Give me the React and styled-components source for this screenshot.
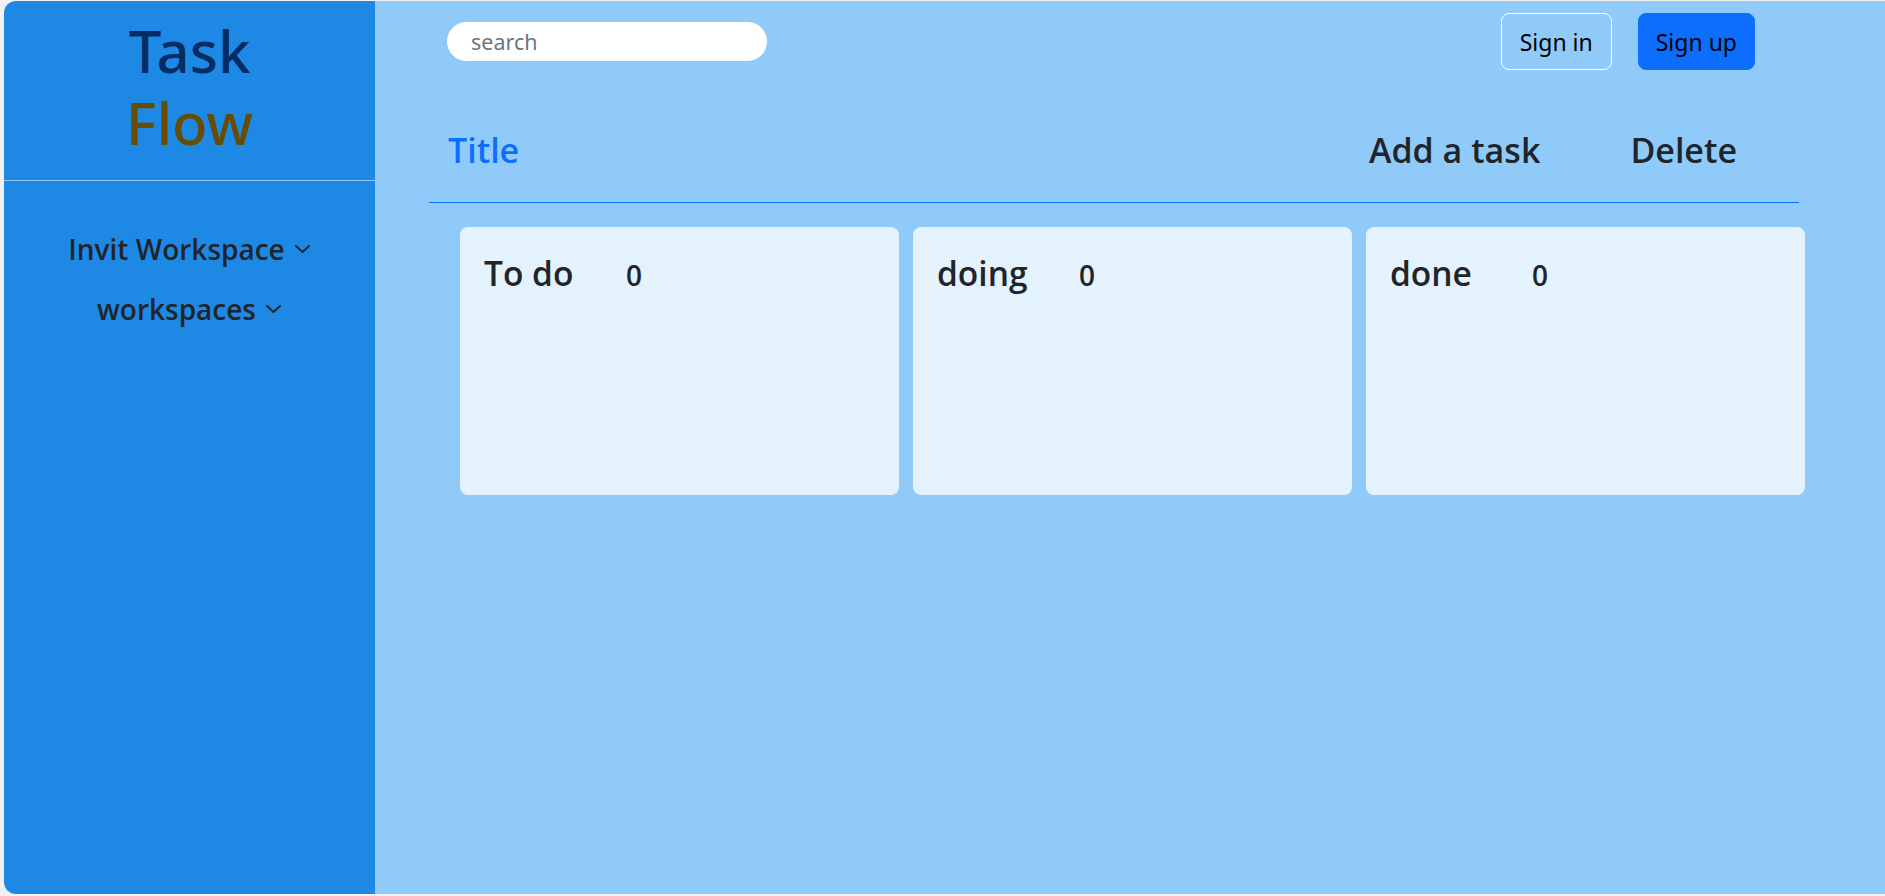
import React from "react";
import styled, { createGlobalStyle } from "styled-components";

const Global = createGlobalStyle`
  html, body { margin: 0; padding: 0; }
  body {
    background: #f1f1f1;
    font-family: "Noto Sans", "Open Sans", sans-serif;
    color: #212529;
  }
  * { box-sizing: border-box; }
`;

const Shell = styled.div`
  display: flex;
  height: 100vh;
  padding: 1px 0 2px 4px;
`;

const Sidebar = styled.aside`
  width: 371px;
  flex-shrink: 0;
  background: #1e88e5;
  border-radius: 12px 0 0 12px;
  display: flex;
  flex-direction: column;
`;

const Brand = styled.div`
  padding: 14px 0 21px;
  border-bottom: 1px solid #90caf9;
  text-align: center;
  font-size: 58px;
  line-height: 72px;
  font-weight: 500;
`;

const BrandLine = styled.div`
  color: ${(p) => p.$color};
`;

const Nav = styled.nav`
  display: flex;
  flex-direction: column;
  align-items: center;
  gap: 24px;
  padding-top: 50px;
`;

const NavItem = styled.div`
  display: flex;
  align-items: center;
  gap: 9px;
  font-family: "Open Sans", "Noto Sans", sans-serif;
  font-size: 28px;
  line-height: 36px;
  font-weight: 600;
  color: #212529;
  cursor: pointer;
`;

const Main = styled.main`
  flex: 1;
  background: #90caf9;
  display: flex;
  flex-direction: column;
`;

const TopBar = styled.div`
  display: flex;
  align-items: center;
  justify-content: space-between;
  padding: 12px 130px 0 72px;
`;

const Search = styled.input`
  width: 320px;
  height: 39px;
  border: none;
  border-radius: 20px;
  background: #fff;
  padding: 0 24px;
  font-family: inherit;
  font-size: 21.5px;
  color: #212529;
  outline: none;
  &::placeholder { color: #6c757d; }
`;

const Actions = styled.div`
  display: flex;
  gap: 26px;
`;

const Button = styled.button`
  height: 57px;
  padding: 0 ${(p) => (p.$primary ? 17 : 18)}px;
  border-radius: 8px;
  border: 1px solid ${(p) => (p.$primary ? "#0d6efd" : "#fff")};
  background: ${(p) => (p.$primary ? "#0d6efd" : "transparent")};
  color: #000;
  font-family: inherit;
  font-size: 23px;
  cursor: pointer;
`;

const Header = styled.div`
  margin-left: 54px;
  width: 1370px;
  display: flex;
  align-items: center;
  padding: 56px 62px 28px 19px;
  border-bottom: 1px solid #0d6efd;
  font-family: "Open Sans", "Noto Sans", sans-serif;
  font-size: 34px;
  line-height: 48px;
  font-weight: 600;
`;

const BoardTitle = styled.div`
  color: #0d6efd;
  flex: 1;
`;

const HeaderAction = styled.div`
  color: #212529;
  margin-left: ${(p) => p.$gap}px;
  cursor: pointer;
`;

const Board = styled.div`
  display: grid;
  grid-template-columns: repeat(3, 439px);
  gap: 14px;
  margin: 24px 0 0 85px;
`;

const Column = styled.section`
  height: 268px;
  background: #e3f2fd;
  border-radius: 8px;
  padding: 25px 25px 25px 24px;
`;

const ColumnHead = styled.div`
  display: flex;
  align-items: baseline;
  font-family: "Open Sans", "Noto Sans", sans-serif;
  font-weight: 600;
`;

const ColumnTitle = styled.div`
  width: 142px;
  font-size: 33.5px;
  line-height: 42px;
`;

const Count = styled.div`
  font-size: 28px;
`;

const Chevron = () => (
  <svg width="17" height="10" viewBox="0 0 17 10" fill="none">
    <polyline points="2,2 8.5,8 15,2" stroke="#212529" strokeWidth="2" strokeLinecap="round" strokeLinejoin="round" />
  </svg>
);

const columns = [
  { name: "To do", count: 0 },
  { name: "doing", count: 0 },
  { name: "done", count: 0 },
];

export default function App() {
  return (
    <>
      <Global />
      <Shell>
        <Sidebar>
          <Brand>
            <BrandLine $color="#052c65">Task</BrandLine>
            <BrandLine $color="#664d03">Flow</BrandLine>
          </Brand>
          <Nav>
            <NavItem>
              Invit Workspace <Chevron />
            </NavItem>
            <NavItem>
              workspaces <Chevron />
            </NavItem>
          </Nav>
        </Sidebar>
        <Main>
          <TopBar>
            <Search placeholder="search" />
            <Actions>
              <Button>Sign in</Button>
              <Button $primary>Sign up</Button>
            </Actions>
          </TopBar>
          <Header>
            <BoardTitle>Title</BoardTitle>
            <HeaderAction $gap={0}>Add a task</HeaderAction>
            <HeaderAction $gap={90}>Delete</HeaderAction>
          </Header>
          <Board>
            {columns.map((c) => (
              <Column key={c.name}>
                <ColumnHead>
                  <ColumnTitle>{c.name}</ColumnTitle>
                  <Count>{c.count}</Count>
                </ColumnHead>
              </Column>
            ))}
          </Board>
        </Main>
      </Shell>
    </>
  );
}
